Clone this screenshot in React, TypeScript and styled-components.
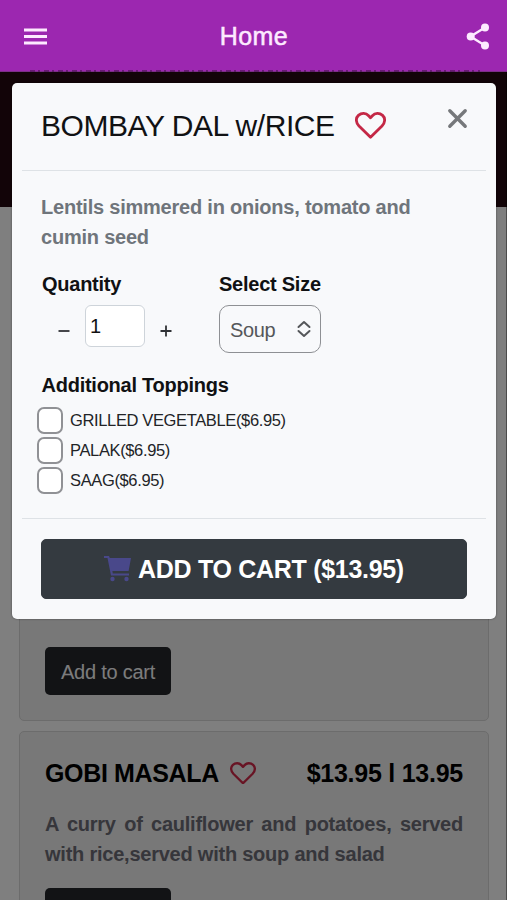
import React from "react";
import styled, { createGlobalStyle } from "styled-components";

const GlobalStyle = createGlobalStyle`
  *, *::before, *::after { box-sizing: border-box; }
  body {
    margin: 0;
    overflow: hidden;
    background: #fff;
    font-family: "Liberation Sans", Arial, Helvetica, sans-serif;
  }
  button, input { font-family: inherit; }
  h1, h2, h3, p { margin: 0; }
`;

const Screen = styled.div`
  position: relative;
  display: flex;
  flex-direction: column;
  height: 900px;
  overflow: hidden;
`;

const AppBar = styled.header`
  position: relative;
  z-index: 3;
  flex: none;
  display: grid;
  grid-template-columns: 36px 1fr 36px;
  align-items: center;
  height: 72px;
  padding: 1px 11px 0 17px;
  background: #9c27b0;
  border-bottom: 1px solid #7c2f88;
  color: #fdeaff;

  &::after {
    content: "";
    position: absolute;
    left: 30px;
    right: 27px;
    bottom: -1px;
    height: 2px;
    background: repeating-linear-gradient(90deg, #4a1252 0 5px, transparent 5px 8px, #4a1252 8px 10px, transparent 10px 14px);
    opacity: 0.6;
  }
`;

const BarButton = styled.button`
  display: flex;
  justify-content: center;
  padding: 0;
  border: 0;
  background: none;
  color: inherit;
`;

const BarTitle = styled.h1`
  padding-right: 5px;
  text-align: center;
  font-size: 25px;
  line-height: 30px;
  font-weight: 400;
  letter-spacing: 0.4px;
  -webkit-text-stroke: 0.5px currentColor;
`;

const Banner = styled.div`
  flex: none;
  height: 135px;
  background: #240810;
`;

const Menu = styled.main`
  display: flex;
  flex-direction: column;
  gap: 10px;
  padding: 10px 18px 0 19px;
`;

const DishCard = styled.article<{ $height: number; $end?: boolean }>`
  flex: none;
  display: flex;
  flex-direction: column;
  justify-content: ${(p) => (p.$end ? "flex-end" : "flex-start")};
  height: ${(p) => p.$height}px;
  padding: 25px;
  border: 1px solid #d8d8d8;
  border-radius: 5px;
  background: #f0f0f0;
`;

const DishHead = styled.div`
  display: flex;
  align-items: center;
  height: 32px;
  white-space: nowrap;
`;

const DishName = styled.h2`
  width: 185px;
  font-size: 25px;
  line-height: 32px;
  letter-spacing: -0.35px;
`;

const DishPrice = styled(DishName)`
  width: auto;
  margin-left: auto;
  letter-spacing: -0.25px;
`;

const DishText = styled.p`
  margin: 20px 0 19px;
  color: #6c6c76;
  font-size: 20px;
  line-height: 30px;
  font-weight: 700;
  letter-spacing: -0.23px;
  text-align: justify;
`;

const DishButton = styled.button`
  flex: none;
  width: 126px;
  height: 48px;
  padding: 2px 0 0;
  border: 0;
  border-radius: 5px;
  background: #24262a;
  color: #f8f9fa;
  font-size: 20px;
  letter-spacing: -0.25px;
`;

const Backdrop = styled.div`
  position: absolute;
  inset: 72px 0 0;
  z-index: 2;
  padding: 11px 10px 0 12px;
  border-right: 1px solid rgba(0, 0, 0, 0.4);
  background: rgba(0, 0, 0, 0.5);
`;

const Dialog = styled.section`
  display: flex;
  flex-direction: column;
  height: 536px;
  padding: 0 10px;
  border-radius: 5px;
  background: #f8f9fb;
  box-shadow: 0 0 2px rgba(0, 0, 0, 0.5);
`;

const DialogHead = styled.div`
  display: flex;
  align-items: center;
  height: 88px;
  padding: 0 18px 2px 19px;
  border-bottom: 1px solid #dee2e6;
`;

const DialogTitle = styled.h2`
  width: 314px;
  color: #111214;
  font-size: 30px;
  line-height: 40px;
  font-weight: 400;
  letter-spacing: -0.45px;
  white-space: nowrap;
`;

const CloseButton = styled.button`
  display: flex;
  margin: -14px 0 0 auto;
  padding: 0;
  border: 0;
  background: none;
`;

const DialogBody = styled.div`
  display: flex;
  flex-direction: column;
  height: 348px;
  padding: 21px 19px 0;
  border-bottom: 1px solid #dee2e6;
`;

const Description = styled.p`
  color: #6f757b;
  font-size: 20px;
  line-height: 30px;
  font-weight: 700;
  letter-spacing: -0.22px;
`;

const Options = styled.div`
  display: grid;
  grid-template-columns: 178px 1fr;
  padding-top: 19px;
`;

const Label = styled.h3<{ $indent?: number }>`
  height: 26px;
  padding-left: ${(p) => p.$indent ?? 0}px;
  color: #101113;
  font-size: 20px;
  line-height: 26px;
  font-weight: 700;
  letter-spacing: -0.25px;
  white-space: nowrap;
`;

const Stepper = styled.div`
  display: flex;
  align-items: center;
  height: 42px;
  margin-top: 8px;
  padding-left: 16px;
`;

const StepButton = styled.button`
  display: flex;
  justify-content: center;
  width: 14px;
  padding: 9px 0 0;
  border: 0;
  background: none;
`;

const QuantityInput = styled.input`
  width: 60px;
  height: 42px;
  margin: 0 14px;
  padding: 1px 5px 0 4px;
  border: 1px solid #ced4da;
  border-radius: 6px;
  background: #fff;
  color: #111;
  font-size: 20px;
`;

const SizeSelect = styled.button`
  display: flex;
  align-items: center;
  justify-content: space-between;
  width: 102px;
  height: 48px;
  margin-top: 8px;
  padding: 2px 9px 0 10px;
  border: 1.5px solid #8e9094;
  border-radius: 10px;
  background: #f8f9fb;
  color: #55575a;
  font-size: 20px;
  letter-spacing: -0.4px;

  svg { margin-top: -2px; }
`;

const Toppings = styled.div`
  padding-top: 19px;
`;

const ToppingList = styled.div`
  padding-top: 7px;
`;

const ToppingRow = styled.label`
  display: flex;
  align-items: center;
  gap: 7px;
  height: 30px;
  margin-left: -4px;
  color: #222427;
  font-size: 16.5px;
  letter-spacing: -0.36px;
  white-space: nowrap;
`;

const CheckBox = styled.input`
  appearance: none;
  width: 26px;
  height: 27px;
  margin: 0;
  border: 2px solid #909195;
  border-radius: 7px;
  background: #fff;
`;

const AddButton = styled.button`
  display: flex;
  align-items: center;
  justify-content: center;
  gap: 7px;
  height: 60px;
  margin: 20px 19px 0;
  padding: 0;
  border: 1px solid #343a40;
  border-radius: 5px;
  background: #343a40;
  color: #fff;
  font-size: 25px;
  font-weight: 700;
  letter-spacing: -0.3px;
  white-space: nowrap;
`;

const Heart = ({ width, color }: { width: number; color: string }) => (
  <svg width={width} height={(width * 27) / 31} viewBox="0 0 31 27" fill="none" stroke={color} strokeWidth="2.8" strokeLinejoin="round">
    <path d="M15.5 25.3 4 14C.6 10.5.6 6 3.4 3.4 6.5.7 11 .8 13.6 3.7L15.5 5.8 17.4 3.7C20 .8 24.5.7 27.6 3.4 30.4 6 30.4 10.5 27 14Z" />
  </svg>
);

const toppings = ["GRILLED VEGETABLE($6.95)", "PALAK($6.95)", "SAAG($6.95)"];

export default function App() {
  return (
    <Screen>
      <GlobalStyle />
      <AppBar>
        <BarButton aria-label="Menu">
          <svg width="23" height="17" stroke="currentColor" strokeWidth="2.8">
            <path d="M0 2h23M0 8.5h23M0 15h23" />
          </svg>
        </BarButton>
        <BarTitle>Home</BarTitle>
        <BarButton aria-label="Share">
          <svg width="24" height="27" viewBox="0 0 24 27" fill="currentColor">
            <path d="M19 4.5 4.5 13.5 19 22.5" fill="none" stroke="currentColor" strokeWidth="2.4" />
            <circle cx="19" cy="4.5" r="4" />
            <circle cx="4.7" cy="13.5" r="4" />
            <circle cx="19" cy="22.5" r="4" />
          </svg>
        </BarButton>
      </AppBar>
      <Banner />
      <Menu>
        <DishCard $height={504} $end>
          <DishButton>Add to cart</DishButton>
        </DishCard>
        <DishCard $height={300}>
          <DishHead>
            <DishName>GOBI MASALA</DishName>
            <Heart width={26} color="#d02848" />
            <DishPrice>$13.95 l 13.95</DishPrice>
          </DishHead>
          <DishText>A curry of cauliflower and potatoes, served with rice,served with soup and salad</DishText>
          <DishButton aria-label="Add to cart" />
        </DishCard>
      </Menu>
      <Backdrop>
        <Dialog role="dialog">
          <DialogHead>
            <DialogTitle>BOMBAY DAL w/RICE</DialogTitle>
            <Heart width={31} color="#c42846" />
            <CloseButton aria-label="Close">
              <svg width="21" height="21" viewBox="0 0 21 21" stroke="#76787b" strokeWidth="3.4" strokeLinecap="round">
                <path d="M2.8 2.8 18.2 18.2M18.2 2.8 2.8 18.2" />
              </svg>
            </CloseButton>
          </DialogHead>
          <DialogBody>
            <Description>Lentils simmered in onions, tomato and<br />cumin seed</Description>
            <Options>
              <div>
                <Label $indent={1}>Quantity</Label>
                <Stepper>
                  <StepButton aria-label="Decrease">
                    <svg width="12" height="12" stroke="#303236" strokeWidth="1.8"><path d="M.5 6h11" /></svg>
                  </StepButton>
                  <QuantityInput defaultValue="1" />
                  <StepButton aria-label="Increase">
                    <svg width="12" height="12" stroke="#303236" strokeWidth="1.8"><path d="M.5 6h11M6 .5v11" /></svg>
                  </StepButton>
                </Stepper>
              </div>
              <div>
                <Label>Select Size</Label>
                <SizeSelect>
                  Soup
                  <svg width="14" height="18" viewBox="0 0 14 18" fill="none" stroke="#55575a" strokeWidth="2" strokeLinecap="round" strokeLinejoin="round">
                    <path d="M1.5 7 7 2l5.5 5M1.5 11 7 16l5.5-5" />
                  </svg>
                </SizeSelect>
              </div>
            </Options>
            <Toppings>
              <Label $indent={0.5}>Additional Toppings</Label>
              <ToppingList>
                {toppings.map((name) => (
                  <ToppingRow key={name}>
                    <CheckBox type="checkbox" />
                    {name}
                  </ToppingRow>
                ))}
              </ToppingList>
            </Toppings>
          </DialogBody>
          <AddButton>
            <svg width="27" height="26" viewBox="0 0 27 26" fill="#49488a">
              <path d="M0 0h5l.8 2H27l-2.4 13H8.4l.4 2.5H25v2H7L3.5 2H0Z" />
              <circle cx="8.5" cy="23" r="2.2" />
              <circle cx="22.5" cy="23" r="2.2" />
            </svg>
            ADD TO CART ($13.95)
          </AddButton>
        </Dialog>
      </Backdrop>
    </Screen>
  );
}
